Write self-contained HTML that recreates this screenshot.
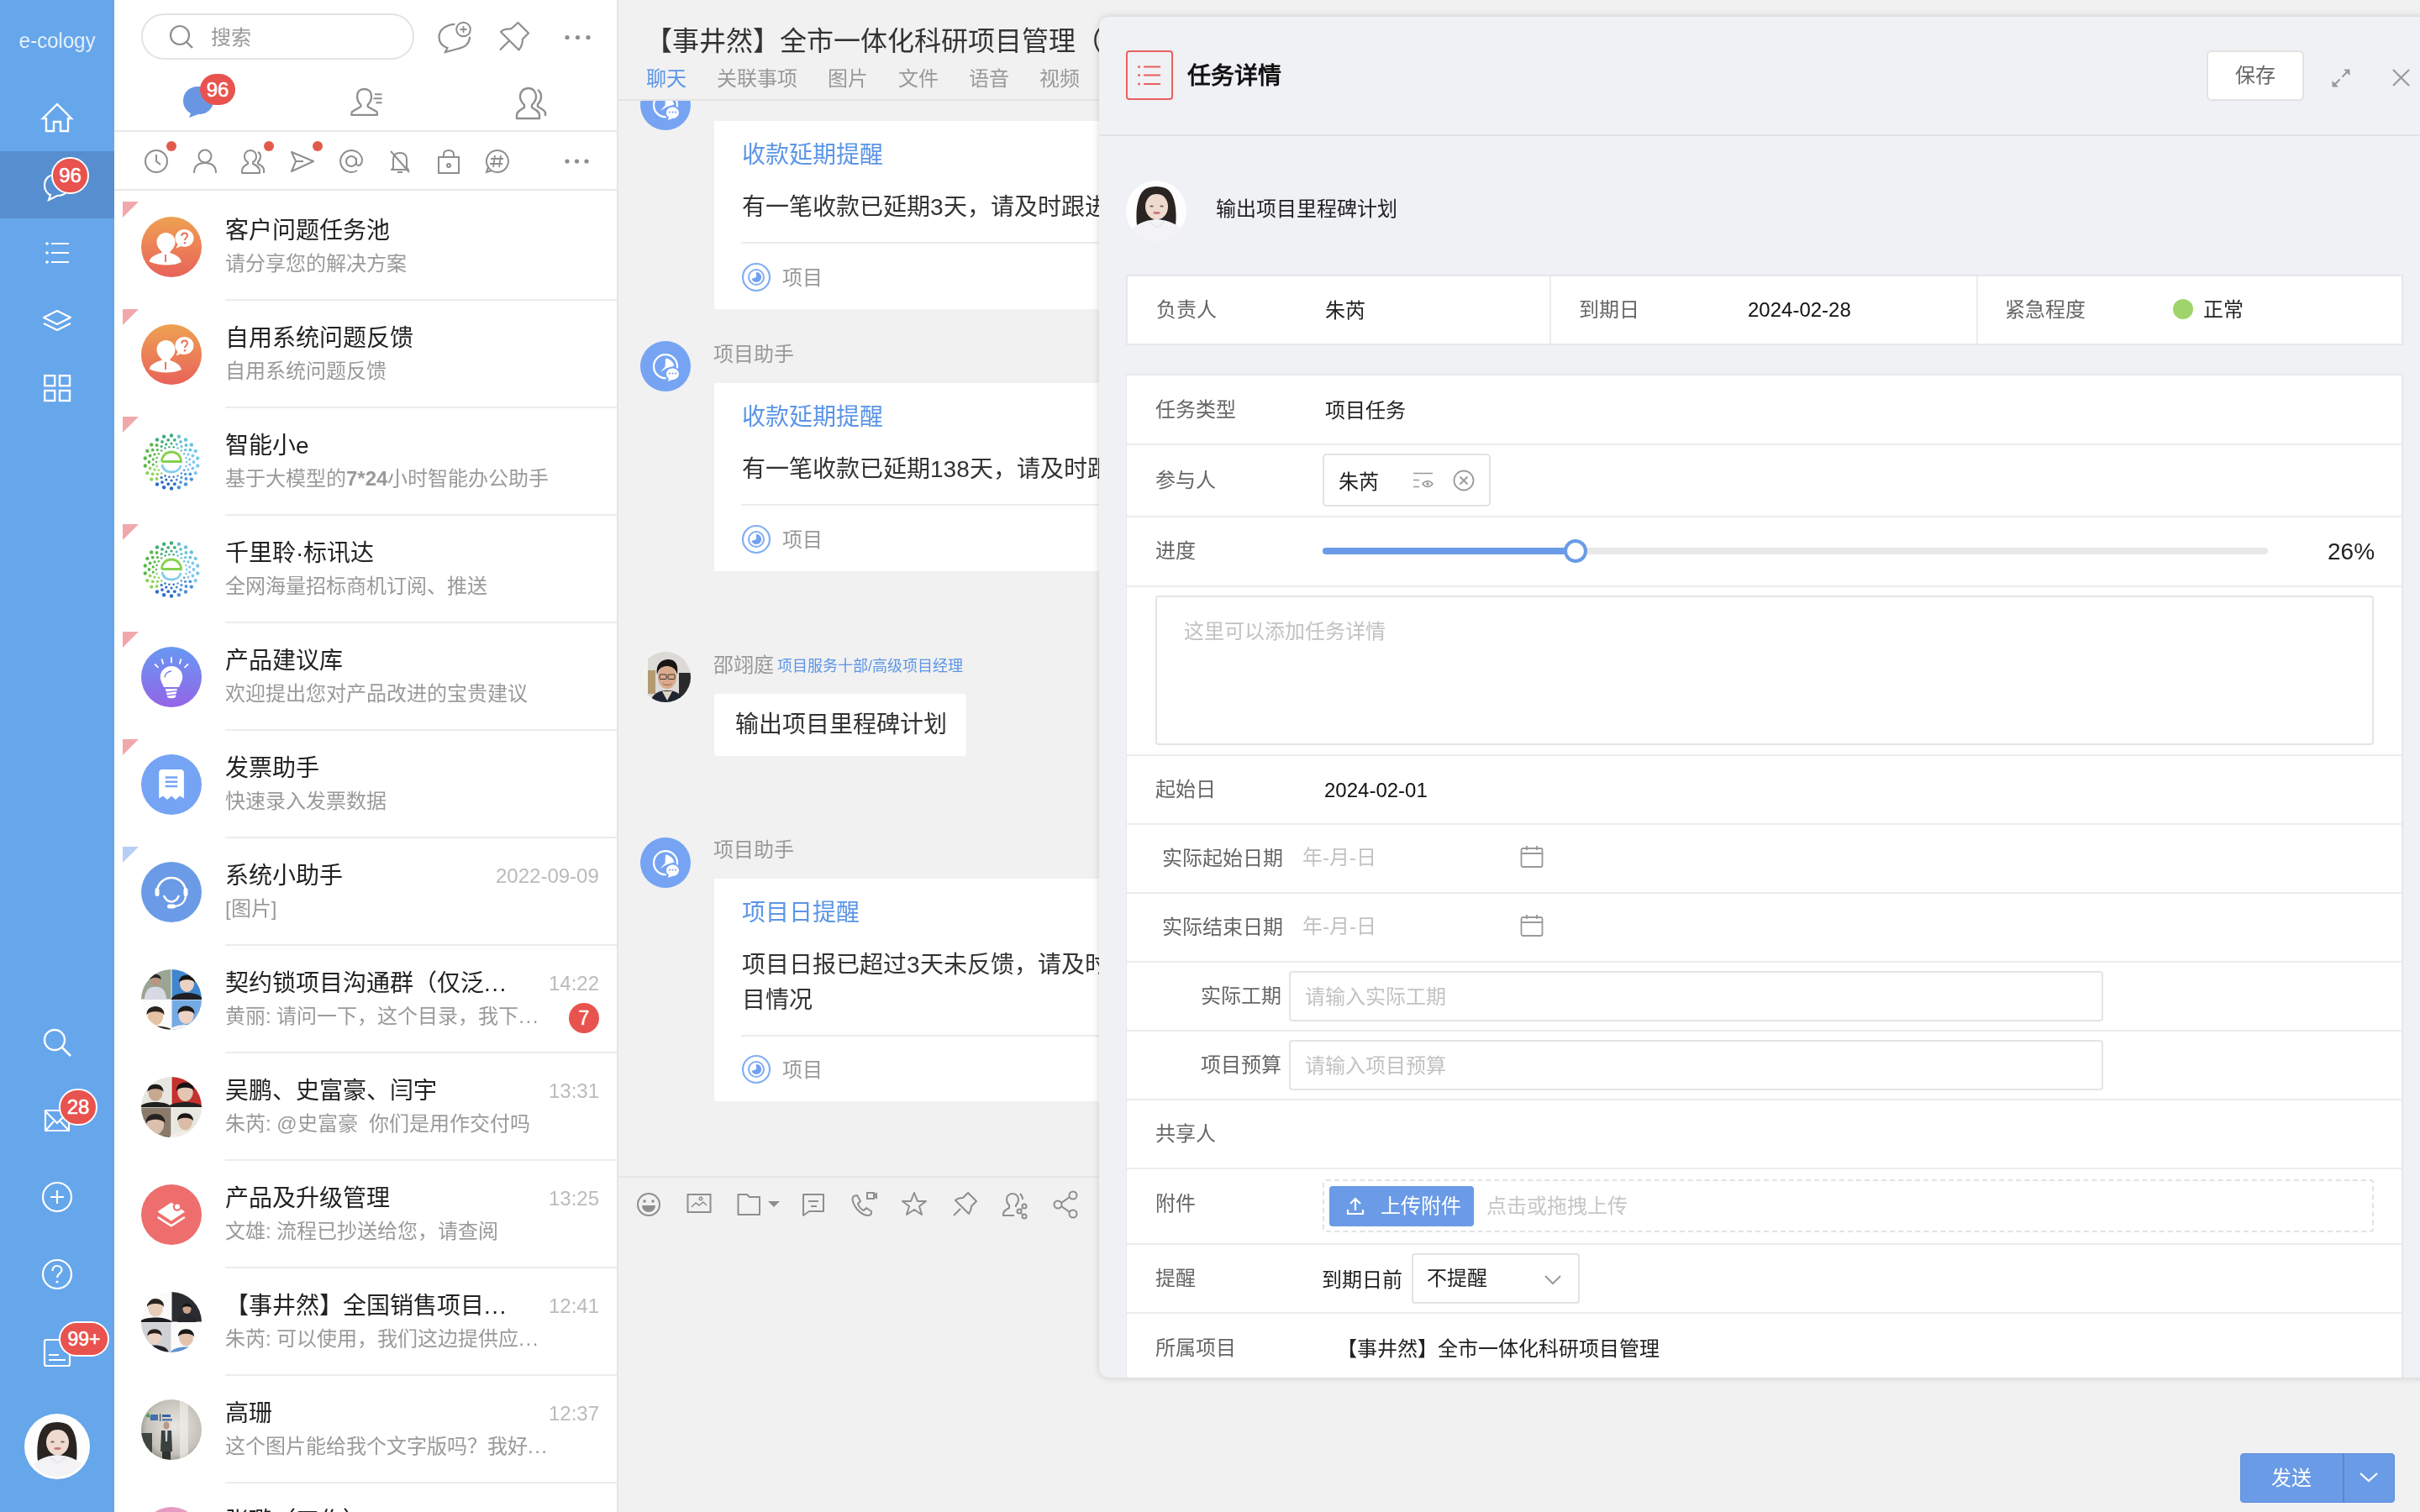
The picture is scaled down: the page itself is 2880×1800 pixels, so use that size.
<!DOCTYPE html>
<html lang="zh-CN"><head><meta charset="utf-8">
<style>
*{box-sizing:border-box;margin:0;padding:0}
html,body{width:2880px;height:1800px;overflow:hidden;background:#f1f1f1;font-family:"Liberation Sans",sans-serif;color:#222;-webkit-font-smoothing:antialiased}
.t{will-change:transform}
.a{position:absolute}
.t{position:absolute;white-space:nowrap;line-height:1}
svg{position:absolute;overflow:visible}
#sb{left:0;top:0;width:136px;height:1800px;background:#66a6eb}
#lp{left:136px;top:0;width:600px;height:1800px;background:#fff;border-right:2px solid #e6e6e6}
.badge{position:absolute;background:#e8534f;color:#fff;border-radius:22px;font-size:23px;text-align:center;font-weight:normal;-webkit-text-stroke:0.5px #fff}
.it-title{position:absolute;left:268px;font-size:28px;color:#222;white-space:nowrap;line-height:1}
.it-sub{position:absolute;left:268px;font-size:24px;color:#999;white-space:nowrap;line-height:1}
.it-div{position:absolute;left:268px;width:466px;height:2px;background:#ececec}
.it-time{position:absolute;right:2167px;font-size:24px;color:#bbb;white-space:nowrap;line-height:1}
.av{position:absolute;left:168px;width:72px;height:72px;border-radius:50%;overflow:hidden}
.flag{position:absolute;left:146px;width:0;height:0;border-top:19px solid #f0a8ac;border-right:19px solid transparent}
</style></head><body>

<!-- ============ SIDEBAR ============ -->
<div id="sb" class="a">
  <svg width="136" height="80" style="left:0;top:0"><text x="22.5" y="57" font-family="Liberation Sans" font-size="25" fill="rgba(255,255,255,0.95)" stroke="#66a6eb" stroke-width="0.25" textLength="91" lengthAdjust="spacingAndGlyphs">e-cology</text></svg>
  <!-- home -->
  <svg width="136" height="180" style="left:0;top:0"><path d="M68 124 L51 141 L55 141 L55 156 L64 156 L64 145 L72 145 L72 156 L81 156 L81 141 L85 141 Z" fill="none" stroke="#fff" stroke-width="2.4" stroke-linejoin="miter"/></svg>
  <div class="a" style="left:0;top:180px;width:136px;height:80px;background:#568ed0"></div>
  <!-- chat -->
  <svg width="136" height="100" style="left:0;top:180px"><path d="M66 28 C56 28 53 35 53 41 C53 47 57 51 60 52 L58 58 L68 53 C78 53 82 47 82 41" fill="none" stroke="#fff" stroke-width="2.2"/></svg>
  <div class="badge" style="left:61px;top:187px;width:45px;height:44px;border:2px solid #fff;line-height:40px;font-size:24px">96</div>
  <!-- list -->
  <svg width="136" height="40" style="left:0;top:280px"><g fill="#fff"><circle cx="56" cy="10" r="1.8"/><circle cx="56" cy="21" r="1.8"/><circle cx="56" cy="32" r="1.8"/></g><g stroke="#fff" stroke-width="2.2"><path d="M61 10H82M61 21H82M61 32H82"/></g></svg>
  <!-- layers -->
  <svg width="136" height="40" style="left:0;top:362px"><path d="M68 8 L84 16 L68 24 L52 16 Z" fill="none" stroke="#fff" stroke-width="2.2" stroke-linejoin="round"/><path d="M52 23 L68 31 L84 23" fill="none" stroke="#fff" stroke-width="2.2" stroke-linejoin="round"/></svg>
  <!-- grid -->
  <svg width="136" height="40" style="left:0;top:442px"><g fill="none" stroke="#fff" stroke-width="2.4"><rect x="53.2" y="5.2" width="12" height="12"/><rect x="71" y="5.2" width="12" height="12"/><rect x="53.2" y="23" width="12" height="12"/><rect x="71" y="23" width="12" height="12"/></g></svg>
  <!-- search -->
  <svg width="136" height="60" style="left:0;top:1210px"><circle cx="65" cy="28" r="12" fill="none" stroke="#fff" stroke-width="2.4"/><path d="M74 37 L84 47" stroke="#fff" stroke-width="2.6"/></svg>
  <!-- mail -->
  <svg width="136" height="60" style="left:0;top:1300px"><path d="M54 22 H82 V46 H54 Z" fill="none" stroke="#fff" stroke-width="2.2" stroke-linejoin="round"/><path d="M54 23 L68 37 L82 23 M55 45 L64 35 M81 45 L72 35" fill="none" stroke="#fff" stroke-width="2"/></svg>
  <div class="badge" style="left:70px;top:1296px;width:46px;height:44px;border:2px solid #fff;line-height:40px;font-size:24px">28</div>
  <!-- plus -->
  <svg width="136" height="60" style="left:0;top:1395px"><circle cx="68" cy="30" r="17" fill="none" stroke="#fff" stroke-width="2.2"/><path d="M68 22V38M60 30H76" stroke="#fff" stroke-width="2.2"/></svg>
  <!-- help -->
  <svg width="136" height="60" style="left:0;top:1487px"><circle cx="68" cy="30" r="17" fill="none" stroke="#fff" stroke-width="2.2"/><path d="M62.5 26 C62.5 21 66 20 68 20 C71 20 73.5 22 73.5 25 C73.5 29 68 29.5 68 34" fill="none" stroke="#fff" stroke-width="2.2"/><circle cx="68" cy="39" r="1.6" fill="#fff"/></svg>
  <!-- doc -->
  <svg width="136" height="60" style="left:0;top:1580px"><rect x="53" y="15" width="30" height="31" rx="2" fill="none" stroke="#fff" stroke-width="2.2"/><path d="M58 33 H70 M58 39 H78" stroke="#fff" stroke-width="2.2"/></svg>
  <div class="badge" style="left:70px;top:1573px;width:60px;height:42px;border:2px solid #fff;line-height:38px;font-size:23px">99+</div>
  <!-- avatar -->
  <svg width="80" height="80" style="left:28px;top:1682px"><circle cx="40" cy="40" r="39" fill="#fff"/><g transform="translate(4,4)"><defs><clipPath id="cw1"><circle cx="36" cy="36" r="36"/></clipPath></defs><g clip-path="url(#cw1)"><rect width="72" height="72" fill="#fdfdfd"/><path d="M13 53 C11 34 14 15 24 9.5 C30 6 42 6 48 9.5 C58 15 61 34 59 53 Z" fill="#2a2523"/><ellipse cx="36.5" cy="31" rx="13.5" ry="15.5" fill="#efdad0"/><path d="M22.5 26 C22 14 29 9.5 36.5 9.5 C44 9.5 51 14 50.5 26 C49 19 44 16 36.5 16 C29 16 24 19 22.5 26 Z" fill="#2a2523"/><ellipse cx="30.5" cy="30.5" rx="2.3" ry="1.1" fill="#6a6060"/><ellipse cx="42.5" cy="30.5" rx="2.3" ry="1.1" fill="#6a6060"/><ellipse cx="36.5" cy="38.5" rx="4.3" ry="1.4" fill="#c9767a"/><path d="M1 72 C3 56 17 47.5 36.5 46 C56 47.5 70 56 72 72 Z" fill="#f3f3f6"/><path d="M28 49 L37 56 L46 49" fill="none" stroke="#e2e2e8" stroke-width="1.2"/></g></g></svg>
</div>


<div id="lp" class="a"></div>
<div class="a" style="left:168px;top:16px;width:325px;height:55px;border:2px solid #e3e3e3;border-radius:27px;background:#fff"></div>
<svg width="40" height="40" viewBox="0 0 40 40" style="left:195px;top:25px"><circle cx="19" cy="17" r="11" fill="none" stroke="#8e8e8e" stroke-width="2.2"/><path d="M27 25 L34 32" stroke="#8e8e8e" stroke-width="2.4"/></svg>
<div class="t" style="left:251px;top:32.7px;font-size:24px;color:#9a9a9a;">搜索</div>
<svg width="50" height="50" viewBox="0 0 50 50" style="left:515px;top:20px"><path d="M25.5 8.8 C17 9.5 7.5 14.5 7.5 24 C7.5 30.5 11.5 35 17.5 37 L15 42 L30 38 C38 36.5 43.5 32 44 24.5" fill="none" stroke="#8e8e8e" stroke-width="2.2" stroke-linecap="round"/><circle cx="36.5" cy="15" r="8.3" fill="none" stroke="#8e8e8e" stroke-width="2"/><path d="M36.5 11V19M32.5 15H40.5" stroke="#8e8e8e" stroke-width="1.8"/></svg>
<svg width="45" height="45" viewBox="0 0 45 45" style="left:590px;top:22px"><path d="M26.5 5 L39 17.5 L32 24.5 C32 30 31 33 27.5 37.5 L6 16 C9 13 13 12 18 12.5 Z M15.5 27 L5 37.5" fill="none" stroke="#8e8e8e" stroke-width="2.2" stroke-linejoin="round"/></svg>
<svg width="45" height="20" viewBox="0 0 45 20" style="left:665px;top:35px"><g fill="#8e8e8e"><circle cx="10" cy="9.5" r="2.6"/><circle cx="22.5" cy="9.5" r="2.6"/><circle cx="35" cy="9.5" r="2.6"/></g></svg>
<svg width="60" height="60" viewBox="0 0 60 60" style="left:210px;top:95px"><path d="M26 8 C14 8 8 16 8 25 C8 32 12 37 17 40 L15 45 L26 41 C38 41 44 33 44 25 C44 16 38 8 26 8 Z" fill="#6896e2"/></svg>
<div class="badge" style="left:238px;top:88px;width:42px;height:37px;line-height:37px;font-size:24px;border-radius:19px">96</div>
<svg width="60" height="50" viewBox="0 0 60 50" style="left:410px;top:98px"><path d="M19.5 27 C16.5 24 15 20.5 15 16.5 C15 11 18.5 8 23.5 8 C28.5 8 32 11 32 16.5 C32 20.5 30.5 24 27.5 27 L27.8 29 L38.4 35 C39 36 39 37 39 38.8 H8.3 C8.3 37 8.5 36 9 35 L19.2 29 Z" fill="none" stroke="#8e8e8e" stroke-width="2.3" stroke-linejoin="round"/><path d="M36 14.2H44.5M34.4 19.2H44.5M37.2 24.3H44.5" stroke="#8e8e8e" stroke-width="2"/></svg>
<svg width="50" height="50" viewBox="0 0 50 50" style="left:610px;top:98px"><path d="M19 7 C12 7 9 12 9 17 C9 22 12 25 14 27 L14 30 C9 33 5 35 5 39 L5 43 L32 43 L32 39 C32 35 28 33 23 30 L23 27 C25 25 28 22 28 17 C28 12 25 7 19 7 Z" fill="none" stroke="#8e8e8e" stroke-width="2.4" stroke-linejoin="round"/><path d="M30 9 C33 11 34 14 34 17 C34 21 32 24 30 26 L30 29 C34 31 38 33 39 36 L39 40" fill="none" stroke="#8e8e8e" stroke-width="2.4"/></svg>
<div class="a" style="left:136px;top:155px;width:598px;height:2px;background:#e8e8e8"></div>
<svg width="40" height="40" viewBox="0 0 40 40" style="left:166px;top:172px"><circle cx="20" cy="20" r="13" fill="none" stroke="#8e8e8e" stroke-width="2"/><path d="M20 12 V20 L25 24" fill="none" stroke="#8e8e8e" stroke-width="2"/></svg>
<svg width="40" height="40" viewBox="0 0 40 40" style="left:224px;top:172px"><circle cx="20" cy="14" r="7.5" fill="none" stroke="#8e8e8e" stroke-width="2"/><path d="M7 34 C7 26 12 22 20 22 C28 22 33 26 33 34" fill="none" stroke="#8e8e8e" stroke-width="2"/></svg>
<svg width="40" height="40" viewBox="0 0 40 40" style="left:282px;top:172px"><path d="M16 7 C11 7 9 11 9 14 C9 18 11 20 13 21 L13 23 C9 25 6 27 6 31 L6 34 L27 34 L27 31 C27 27 23 25 19 23 L19 21 C21 20 23 18 23 14 C23 11 21 7 16 7 Z" fill="none" stroke="#8e8e8e" stroke-width="2" stroke-linejoin="round"/><path d="M25 9 C27 10 28 12 28 14 C28 17 27 19 25 21 L25 23 C29 25 32 27 32 30 L32 34" fill="none" stroke="#8e8e8e" stroke-width="2"/></svg>
<svg width="40" height="40" viewBox="0 0 40 40" style="left:340px;top:172px"><path d="M7 9 L33 20 L7 32 L12 20 Z M12 20 H21" fill="none" stroke="#8e8e8e" stroke-width="2" stroke-linejoin="round"/></svg>
<svg width="40" height="40" viewBox="0 0 40 40" style="left:398px;top:172px"><path d="M26 20 A6 6 0 1 1 26 19.9 M26 16 V22 C26 25 29 26 31 24 C33 22 33 18 33 18 A13 13 0 1 0 27 31" fill="none" stroke="#8e8e8e" stroke-width="2"/></svg>
<svg width="40" height="40" viewBox="0 0 40 40" style="left:456px;top:172px"><path d="M12 28 L12 18 C12 13 15 10 20 10 C25 10 28 13 28 18 L28 28 L30 30 L10 30 Z M17 33 H23 M9 8 L31 33" fill="none" stroke="#8e8e8e" stroke-width="2" stroke-linejoin="round"/></svg>
<svg width="40" height="40" viewBox="0 0 40 40" style="left:514px;top:172px"><rect x="8" y="15" width="24" height="19" fill="none" stroke="#8e8e8e" stroke-width="2"/><path d="M14 15 V12 C14 8 17 7 20 7 C23 7 26 8 26 12 V15" fill="none" stroke="#8e8e8e" stroke-width="2"/><circle cx="20" cy="25" r="2" fill="none" stroke="#8e8e8e" stroke-width="2"/></svg>
<svg width="40" height="40" viewBox="0 0 40 40" style="left:572px;top:172px"><path d="M20 7 A13 13 0 1 1 9 27 L7 33 L13 31" fill="none" stroke="#8e8e8e" stroke-width="2"/><path d="M9 27 A13 13 0 0 1 20 7" fill="none" stroke="#8e8e8e" stroke-width="2"/><path d="M17 13 L15 27 M24 13 L22 27 M12 17 H27 M11 23 H26" fill="none" stroke="#8e8e8e" stroke-width="1.8"/></svg>
<svg width="45" height="20" viewBox="0 0 45 20" style="left:665px;top:182px"><g fill="#8e8e8e"><circle cx="10" cy="10" r="2.6"/><circle cx="21.5" cy="10" r="2.6"/><circle cx="33" cy="10" r="2.6"/></g></svg>
<div class="a" style="left:198px;top:168px;width:12px;height:12px;border-radius:50%;background:#e25a4c"></div>
<div class="a" style="left:314px;top:168px;width:12px;height:12px;border-radius:50%;background:#e25a4c"></div>
<div class="a" style="left:372px;top:168px;width:12px;height:12px;border-radius:50%;background:#e25a4c"></div>
<div class="a" style="left:136px;top:225px;width:598px;height:2px;background:#e8e8e8"></div>
<div class="flag" style="top:240px;border-top-color:#f0a8ac"></div>
<svg width="72" height="72" viewBox="0 0 72 72" style="left:168px;top:258px"><defs><linearGradient id="og" x1="0" y1="0" x2="0" y2="1"><stop offset="0" stop-color="#eea152"/><stop offset="1" stop-color="#e8625a"/></linearGradient></defs><circle cx="36" cy="36" r="36" fill="url(#og)"/><path d="M29.5 19 C23 19 18.5 24 18.5 30 C18.5 35 21.5 39 24.5 41.5 L24.5 43 C19 44.5 11 47 9.5 53.5 C16 56 23 57.5 30 57.5 C37 57.5 43 56.5 48 54 C46.5 47.5 39.5 44.5 34.5 43 L34.5 41.5 C37.5 39 40.5 35 40.5 30 C40.5 24 36 19 29.5 19 Z" fill="#fff"/><path d="M29 45 V54" stroke="#e8665a" stroke-width="1.8"/><ellipse cx="51.5" cy="25.5" rx="11" ry="10.5" fill="#fff"/><path d="M44 32 L41.5 37.5 L49 34.5 Z" fill="#fff"/><path d="M48.3 23 C48.3 20.5 50 19.5 51.7 19.5 C53.5 19.5 55 20.7 55 22.5 C55 25 52 25.3 52 28" fill="none" stroke="#e8705a" stroke-width="1.9"/><circle cx="52" cy="31.2" r="1.3" fill="#e8705a"/></svg>
<div class="t" style="left:268px;top:260.8px;font-size:28px;color:#222;">客户问题任务池</div>
<div class="t" style="left:268px;top:301.7px;font-size:24px;color:#9a9a9a;">请分享您的解决方案</div>
<div class="a" style="left:268px;top:356px;width:466px;height:2px;background:#ececec"></div>
<div class="flag" style="top:368px;border-top-color:#f0a8ac"></div>
<svg width="72" height="72" viewBox="0 0 72 72" style="left:168px;top:386px"><defs><linearGradient id="og2" x1="0" y1="0" x2="0" y2="1"><stop offset="0" stop-color="#eea152"/><stop offset="1" stop-color="#e8625a"/></linearGradient></defs><circle cx="36" cy="36" r="36" fill="url(#og2)"/><path d="M29.5 19 C23 19 18.5 24 18.5 30 C18.5 35 21.5 39 24.5 41.5 L24.5 43 C19 44.5 11 47 9.5 53.5 C16 56 23 57.5 30 57.5 C37 57.5 43 56.5 48 54 C46.5 47.5 39.5 44.5 34.5 43 L34.5 41.5 C37.5 39 40.5 35 40.5 30 C40.5 24 36 19 29.5 19 Z" fill="#fff"/><path d="M29 45 V54" stroke="#e8665a" stroke-width="1.8"/><ellipse cx="51.5" cy="25.5" rx="11" ry="10.5" fill="#fff"/><path d="M44 32 L41.5 37.5 L49 34.5 Z" fill="#fff"/><path d="M48.3 23 C48.3 20.5 50 19.5 51.7 19.5 C53.5 19.5 55 20.7 55 22.5 C55 25 52 25.3 52 28" fill="none" stroke="#e8705a" stroke-width="1.9"/><circle cx="52" cy="31.2" r="1.3" fill="#e8705a"/></svg>
<div class="t" style="left:268px;top:388.8px;font-size:28px;color:#222;">自用系统问题反馈</div>
<div class="t" style="left:268px;top:429.7px;font-size:24px;color:#9a9a9a;">自用系统问题反馈</div>
<div class="a" style="left:268px;top:484px;width:466px;height:2px;background:#ececec"></div>
<div class="flag" style="top:496px;border-top-color:#f0a8ac"></div>
<svg width="72" height="72" viewBox="0 0 72 72" style="left:168px;top:514px"><circle cx="36.0" cy="4.5" r="2.2" fill="#3fae78"/><circle cx="44.9" cy="5.8" r="2.2" fill="#66c2d6"/><circle cx="53.0" cy="9.5" r="2.2" fill="#66c2d6"/><circle cx="59.8" cy="15.4" r="2.2" fill="#66c2d6"/><circle cx="64.7" cy="22.9" r="2.2" fill="#7cc8ee"/><circle cx="67.2" cy="31.5" r="2.2" fill="#7cc8ee"/><circle cx="67.2" cy="40.5" r="2.2" fill="#7cc8ee"/><circle cx="64.7" cy="49.1" r="2.2" fill="#7cc8ee"/><circle cx="59.8" cy="56.6" r="2.2" fill="#4f93da"/><circle cx="53.0" cy="62.5" r="2.2" fill="#4f93da"/><circle cx="44.9" cy="66.2" r="2.2" fill="#4f93da"/><circle cx="36.0" cy="67.5" r="2.2" fill="#2e6cc7"/><circle cx="27.1" cy="66.2" r="2.2" fill="#2e6cc7"/><circle cx="19.0" cy="62.5" r="2.2" fill="#2e6cc7"/><circle cx="12.2" cy="56.6" r="2.2" fill="#8cd461"/><circle cx="7.3" cy="49.1" r="2.2" fill="#8cd461"/><circle cx="4.8" cy="40.5" r="2.2" fill="#5ab84c"/><circle cx="4.8" cy="31.5" r="2.2" fill="#5ab84c"/><circle cx="7.3" cy="22.9" r="2.2" fill="#5ab84c"/><circle cx="12.2" cy="15.4" r="2.2" fill="#5ab84c"/><circle cx="19.0" cy="9.5" r="2.2" fill="#3fae78"/><circle cx="27.1" cy="5.8" r="2.2" fill="#3fae78"/><circle cx="39.8" cy="9.8" r="1.9" fill="#3fae78"/><circle cx="47.0" cy="11.9" r="1.9" fill="#66c2d6"/><circle cx="53.4" cy="16.0" r="1.9" fill="#66c2d6"/><circle cx="58.3" cy="21.7" r="1.9" fill="#66c2d6"/><circle cx="61.4" cy="28.5" r="1.9" fill="#7cc8ee"/><circle cx="62.5" cy="36.0" r="1.9" fill="#7cc8ee"/><circle cx="61.4" cy="43.5" r="1.9" fill="#7cc8ee"/><circle cx="58.3" cy="50.3" r="1.9" fill="#4f93da"/><circle cx="53.4" cy="56.0" r="1.9" fill="#4f93da"/><circle cx="47.0" cy="60.1" r="1.9" fill="#4f93da"/><circle cx="39.8" cy="62.2" r="1.9" fill="#2e6cc7"/><circle cx="32.2" cy="62.2" r="1.9" fill="#2e6cc7"/><circle cx="25.0" cy="60.1" r="1.9" fill="#2e6cc7"/><circle cx="18.6" cy="56.0" r="1.9" fill="#8cd461"/><circle cx="13.7" cy="50.3" r="1.9" fill="#8cd461"/><circle cx="10.6" cy="43.5" r="1.9" fill="#8cd461"/><circle cx="9.5" cy="36.0" r="1.9" fill="#5ab84c"/><circle cx="10.6" cy="28.5" r="1.9" fill="#5ab84c"/><circle cx="13.7" cy="21.7" r="1.9" fill="#5ab84c"/><circle cx="18.6" cy="16.0" r="1.9" fill="#5ab84c"/><circle cx="25.0" cy="11.9" r="1.9" fill="#3fae78"/><circle cx="32.2" cy="9.8" r="1.9" fill="#3fae78"/><circle cx="36.0" cy="14.0" r="1.6" fill="#3fae78"/><circle cx="42.2" cy="14.9" r="1.6" fill="#66c2d6"/><circle cx="47.9" cy="17.5" r="1.6" fill="#66c2d6"/><circle cx="52.6" cy="21.6" r="1.6" fill="#66c2d6"/><circle cx="56.0" cy="26.9" r="1.6" fill="#7cc8ee"/><circle cx="57.8" cy="32.9" r="1.6" fill="#7cc8ee"/><circle cx="57.8" cy="39.1" r="1.6" fill="#7cc8ee"/><circle cx="56.0" cy="45.1" r="1.6" fill="#7cc8ee"/><circle cx="52.6" cy="50.4" r="1.6" fill="#4f93da"/><circle cx="47.9" cy="54.5" r="1.6" fill="#4f93da"/><circle cx="42.2" cy="57.1" r="1.6" fill="#4f93da"/><circle cx="36.0" cy="58.0" r="1.6" fill="#2e6cc7"/><circle cx="29.8" cy="57.1" r="1.6" fill="#2e6cc7"/><circle cx="24.1" cy="54.5" r="1.6" fill="#2e6cc7"/><circle cx="19.4" cy="50.4" r="1.6" fill="#8cd461"/><circle cx="16.0" cy="45.1" r="1.6" fill="#8cd461"/><circle cx="14.2" cy="39.1" r="1.6" fill="#5ab84c"/><circle cx="14.2" cy="32.9" r="1.6" fill="#5ab84c"/><circle cx="16.0" cy="26.9" r="1.6" fill="#5ab84c"/><circle cx="19.4" cy="21.6" r="1.6" fill="#5ab84c"/><circle cx="24.1" cy="17.5" r="1.6" fill="#3fae78"/><circle cx="29.8" cy="14.9" r="1.6" fill="#3fae78"/><circle cx="38.6" cy="18.2" r="1.25" fill="#3fae78"/><circle cx="43.5" cy="19.6" r="1.25" fill="#66c2d6"/><circle cx="47.8" cy="22.4" r="1.25" fill="#66c2d6"/><circle cx="51.1" cy="26.3" r="1.25" fill="#66c2d6"/><circle cx="53.3" cy="30.9" r="1.25" fill="#7cc8ee"/><circle cx="54.0" cy="36.0" r="1.25" fill="#7cc8ee"/><circle cx="53.3" cy="41.1" r="1.25" fill="#7cc8ee"/><circle cx="51.1" cy="45.7" r="1.25" fill="#4f93da"/><circle cx="47.8" cy="49.6" r="1.25" fill="#4f93da"/><circle cx="43.5" cy="52.4" r="1.25" fill="#4f93da"/><circle cx="38.6" cy="53.8" r="1.25" fill="#2e6cc7"/><circle cx="33.4" cy="53.8" r="1.25" fill="#2e6cc7"/><circle cx="28.5" cy="52.4" r="1.25" fill="#2e6cc7"/><circle cx="24.2" cy="49.6" r="1.25" fill="#8cd461"/><circle cx="20.9" cy="45.7" r="1.25" fill="#8cd461"/><circle cx="18.7" cy="41.1" r="1.25" fill="#8cd461"/><circle cx="18.0" cy="36.0" r="1.25" fill="#5ab84c"/><circle cx="18.7" cy="30.9" r="1.25" fill="#5ab84c"/><circle cx="20.9" cy="26.3" r="1.25" fill="#5ab84c"/><circle cx="24.2" cy="22.4" r="1.25" fill="#5ab84c"/><circle cx="28.5" cy="19.6" r="1.25" fill="#3fae78"/><circle cx="33.4" cy="18.2" r="1.25" fill="#3fae78"/><path d="M24.5 35.5 H47.5 C47.5 29 42.5 24 36 24 C29.5 24 24.5 29 24.5 35.5" fill="none" stroke="#86d14e" stroke-width="2.8"/><path d="M24.8 39 C26 45 30.5 48 36 48 C41.5 48 46 45 47.2 40" fill="none" stroke="#82cdea" stroke-width="2.8"/></svg>
<div class="t" style="left:268px;top:516.8px;font-size:28px;color:#222;">智能小<span style="font-family:Liberation Sans">e</span></div>
<div class="t" style="left:268px;top:557.7px;font-size:24px;color:#9a9a9a;">基于大模型的<b style="font-weight:bold;color:#999">7*24</b>小时智能办公助手</div>
<div class="a" style="left:268px;top:612px;width:466px;height:2px;background:#ececec"></div>
<div class="flag" style="top:624px;border-top-color:#f0a8ac"></div>
<svg width="72" height="72" viewBox="0 0 72 72" style="left:168px;top:642px"><circle cx="36.0" cy="4.5" r="2.2" fill="#3fae78"/><circle cx="44.9" cy="5.8" r="2.2" fill="#66c2d6"/><circle cx="53.0" cy="9.5" r="2.2" fill="#66c2d6"/><circle cx="59.8" cy="15.4" r="2.2" fill="#66c2d6"/><circle cx="64.7" cy="22.9" r="2.2" fill="#7cc8ee"/><circle cx="67.2" cy="31.5" r="2.2" fill="#7cc8ee"/><circle cx="67.2" cy="40.5" r="2.2" fill="#7cc8ee"/><circle cx="64.7" cy="49.1" r="2.2" fill="#7cc8ee"/><circle cx="59.8" cy="56.6" r="2.2" fill="#4f93da"/><circle cx="53.0" cy="62.5" r="2.2" fill="#4f93da"/><circle cx="44.9" cy="66.2" r="2.2" fill="#4f93da"/><circle cx="36.0" cy="67.5" r="2.2" fill="#2e6cc7"/><circle cx="27.1" cy="66.2" r="2.2" fill="#2e6cc7"/><circle cx="19.0" cy="62.5" r="2.2" fill="#2e6cc7"/><circle cx="12.2" cy="56.6" r="2.2" fill="#8cd461"/><circle cx="7.3" cy="49.1" r="2.2" fill="#8cd461"/><circle cx="4.8" cy="40.5" r="2.2" fill="#5ab84c"/><circle cx="4.8" cy="31.5" r="2.2" fill="#5ab84c"/><circle cx="7.3" cy="22.9" r="2.2" fill="#5ab84c"/><circle cx="12.2" cy="15.4" r="2.2" fill="#5ab84c"/><circle cx="19.0" cy="9.5" r="2.2" fill="#3fae78"/><circle cx="27.1" cy="5.8" r="2.2" fill="#3fae78"/><circle cx="39.8" cy="9.8" r="1.9" fill="#3fae78"/><circle cx="47.0" cy="11.9" r="1.9" fill="#66c2d6"/><circle cx="53.4" cy="16.0" r="1.9" fill="#66c2d6"/><circle cx="58.3" cy="21.7" r="1.9" fill="#66c2d6"/><circle cx="61.4" cy="28.5" r="1.9" fill="#7cc8ee"/><circle cx="62.5" cy="36.0" r="1.9" fill="#7cc8ee"/><circle cx="61.4" cy="43.5" r="1.9" fill="#7cc8ee"/><circle cx="58.3" cy="50.3" r="1.9" fill="#4f93da"/><circle cx="53.4" cy="56.0" r="1.9" fill="#4f93da"/><circle cx="47.0" cy="60.1" r="1.9" fill="#4f93da"/><circle cx="39.8" cy="62.2" r="1.9" fill="#2e6cc7"/><circle cx="32.2" cy="62.2" r="1.9" fill="#2e6cc7"/><circle cx="25.0" cy="60.1" r="1.9" fill="#2e6cc7"/><circle cx="18.6" cy="56.0" r="1.9" fill="#8cd461"/><circle cx="13.7" cy="50.3" r="1.9" fill="#8cd461"/><circle cx="10.6" cy="43.5" r="1.9" fill="#8cd461"/><circle cx="9.5" cy="36.0" r="1.9" fill="#5ab84c"/><circle cx="10.6" cy="28.5" r="1.9" fill="#5ab84c"/><circle cx="13.7" cy="21.7" r="1.9" fill="#5ab84c"/><circle cx="18.6" cy="16.0" r="1.9" fill="#5ab84c"/><circle cx="25.0" cy="11.9" r="1.9" fill="#3fae78"/><circle cx="32.2" cy="9.8" r="1.9" fill="#3fae78"/><circle cx="36.0" cy="14.0" r="1.6" fill="#3fae78"/><circle cx="42.2" cy="14.9" r="1.6" fill="#66c2d6"/><circle cx="47.9" cy="17.5" r="1.6" fill="#66c2d6"/><circle cx="52.6" cy="21.6" r="1.6" fill="#66c2d6"/><circle cx="56.0" cy="26.9" r="1.6" fill="#7cc8ee"/><circle cx="57.8" cy="32.9" r="1.6" fill="#7cc8ee"/><circle cx="57.8" cy="39.1" r="1.6" fill="#7cc8ee"/><circle cx="56.0" cy="45.1" r="1.6" fill="#7cc8ee"/><circle cx="52.6" cy="50.4" r="1.6" fill="#4f93da"/><circle cx="47.9" cy="54.5" r="1.6" fill="#4f93da"/><circle cx="42.2" cy="57.1" r="1.6" fill="#4f93da"/><circle cx="36.0" cy="58.0" r="1.6" fill="#2e6cc7"/><circle cx="29.8" cy="57.1" r="1.6" fill="#2e6cc7"/><circle cx="24.1" cy="54.5" r="1.6" fill="#2e6cc7"/><circle cx="19.4" cy="50.4" r="1.6" fill="#8cd461"/><circle cx="16.0" cy="45.1" r="1.6" fill="#8cd461"/><circle cx="14.2" cy="39.1" r="1.6" fill="#5ab84c"/><circle cx="14.2" cy="32.9" r="1.6" fill="#5ab84c"/><circle cx="16.0" cy="26.9" r="1.6" fill="#5ab84c"/><circle cx="19.4" cy="21.6" r="1.6" fill="#5ab84c"/><circle cx="24.1" cy="17.5" r="1.6" fill="#3fae78"/><circle cx="29.8" cy="14.9" r="1.6" fill="#3fae78"/><circle cx="38.6" cy="18.2" r="1.25" fill="#3fae78"/><circle cx="43.5" cy="19.6" r="1.25" fill="#66c2d6"/><circle cx="47.8" cy="22.4" r="1.25" fill="#66c2d6"/><circle cx="51.1" cy="26.3" r="1.25" fill="#66c2d6"/><circle cx="53.3" cy="30.9" r="1.25" fill="#7cc8ee"/><circle cx="54.0" cy="36.0" r="1.25" fill="#7cc8ee"/><circle cx="53.3" cy="41.1" r="1.25" fill="#7cc8ee"/><circle cx="51.1" cy="45.7" r="1.25" fill="#4f93da"/><circle cx="47.8" cy="49.6" r="1.25" fill="#4f93da"/><circle cx="43.5" cy="52.4" r="1.25" fill="#4f93da"/><circle cx="38.6" cy="53.8" r="1.25" fill="#2e6cc7"/><circle cx="33.4" cy="53.8" r="1.25" fill="#2e6cc7"/><circle cx="28.5" cy="52.4" r="1.25" fill="#2e6cc7"/><circle cx="24.2" cy="49.6" r="1.25" fill="#8cd461"/><circle cx="20.9" cy="45.7" r="1.25" fill="#8cd461"/><circle cx="18.7" cy="41.1" r="1.25" fill="#8cd461"/><circle cx="18.0" cy="36.0" r="1.25" fill="#5ab84c"/><circle cx="18.7" cy="30.9" r="1.25" fill="#5ab84c"/><circle cx="20.9" cy="26.3" r="1.25" fill="#5ab84c"/><circle cx="24.2" cy="22.4" r="1.25" fill="#5ab84c"/><circle cx="28.5" cy="19.6" r="1.25" fill="#3fae78"/><circle cx="33.4" cy="18.2" r="1.25" fill="#3fae78"/><path d="M24.5 35.5 H47.5 C47.5 29 42.5 24 36 24 C29.5 24 24.5 29 24.5 35.5" fill="none" stroke="#86d14e" stroke-width="2.8"/><path d="M24.8 39 C26 45 30.5 48 36 48 C41.5 48 46 45 47.2 40" fill="none" stroke="#82cdea" stroke-width="2.8"/></svg>
<div class="t" style="left:268px;top:644.8px;font-size:28px;color:#222;">千里聆·标讯达</div>
<div class="t" style="left:268px;top:685.7px;font-size:24px;color:#9a9a9a;">全网海量招标商机订阅、推送</div>
<div class="a" style="left:268px;top:740px;width:466px;height:2px;background:#ececec"></div>
<div class="flag" style="top:752px;border-top-color:#f0a8ac"></div>
<svg width="72" height="72" viewBox="0 0 72 72" style="left:168px;top:770px"><defs><linearGradient id="pg" x1="0" y1="0" x2="0" y2="1"><stop offset="0" stop-color="#6898f2"/><stop offset="1" stop-color="#9464e8"/></linearGradient></defs><circle cx="36" cy="36" r="36" fill="url(#pg)"/><path d="M36 23 C28.5 23 22.7 29 22.7 36 C22.7 40 25 43.5 27 48 H45 C47 43.5 49.3 40 49.3 36 C49.3 29 43.5 23 36 23 Z" fill="#fff"/><path d="M28.9 50 H42.9 L40.8 60 C39 61.8 33 61.8 31.2 60 Z" fill="#fff"/><path d="M29.2 54.3 L42.6 52.6 M30.2 58.2 L41.8 56.6" stroke="#8a6fea" stroke-width="1.3"/><path d="M36 13 V18.5 M24.6 15 L26.2 20 M47.4 15 L45.8 20 M16.5 21 L20 24.3 M55.5 21 L52 24.3" stroke="#fff" stroke-width="1.8" stroke-linecap="round"/><path d="M28 36.5 C28.5 32.5 31.5 29.5 36 29" stroke="#7d80ea" stroke-width="1.4" fill="none"/></svg>
<div class="t" style="left:268px;top:772.8px;font-size:28px;color:#222;">产品建议库</div>
<div class="t" style="left:268px;top:813.7px;font-size:24px;color:#9a9a9a;">欢迎提出您对产品改进的宝贵建议</div>
<div class="a" style="left:268px;top:868px;width:466px;height:2px;background:#ececec"></div>
<div class="flag" style="top:880px;border-top-color:#f0a8ac"></div>
<svg width="72" height="72" viewBox="0 0 72 72" style="left:168px;top:898px"><circle cx="36" cy="36" r="36" fill="#76a4f4"/><path d="M21.2 22 C21.2 19.5 22.8 18 25 18 H47 C49.3 18 50.9 19.5 50.9 22 V52.5 L46 49.5 L41 54 L36 49.5 L31 54 L26 49.5 L21.2 52.5 Z" fill="#fff"/><path d="M28.7 27.5 H43.2 M28.7 32.8 H43.2 M28.7 38 H43.2" stroke="#76a4f4" stroke-width="2.6"/></svg>
<div class="t" style="left:268px;top:900.8px;font-size:28px;color:#222;">发票助手</div>
<div class="t" style="left:268px;top:941.7px;font-size:24px;color:#9a9a9a;">快速录入发票数据</div>
<div class="a" style="left:268px;top:996px;width:466px;height:2px;background:#ececec"></div>
<div class="flag" style="top:1008px;border-top-color:#b8cff5"></div>
<svg width="72" height="72" viewBox="0 0 72 72" style="left:168px;top:1026px"><circle cx="36" cy="36" r="36" fill="#6b9be6"/><path d="M19 36 A17 17 0 0 1 53 36" fill="none" stroke="#fff" stroke-width="2.6"/><rect x="16.5" y="31" width="5" height="10" rx="2.5" fill="#fff"/><rect x="50.5" y="31" width="5" height="10" rx="2.5" fill="#fff"/><path d="M53 40 C52.5 48 47 52.5 39 53" fill="none" stroke="#fff" stroke-width="2.4"/><rect x="31" y="50.5" width="10" height="5" rx="2.5" fill="#fff"/><path d="M27.5 41 C29.5 45.5 32.5 47.5 36 47.5 C39.5 47.5 42.5 45.5 44.5 41" fill="none" stroke="#fff" stroke-width="2.6" stroke-linecap="round"/></svg>
<div class="t" style="left:268px;top:1028.8px;font-size:28px;color:#222;">系统小助手</div>
<div class="t" style="left:268px;top:1069.7px;font-size:24px;color:#9a9a9a;">[图片]</div>
<div class="t" style="right:2167px;top:1030.7px;font-size:24px;color:#bbbbbb;">2022-09-09</div>
<div class="a" style="left:268px;top:1124px;width:466px;height:2px;background:#ececec"></div>
<svg width="72" height="72" viewBox="0 0 72 72" style="left:168px;top:1154px"><defs><clipPath id="cq1"><circle cx="36" cy="36" r="36"/></clipPath></defs><g clip-path="url(#cq1)"><rect x="0" y="0" width="35.5" height="35.5" fill="#9aa593"/><path d="M3.7 36 C5.1 22.1 11.4 20.7 17.0 20.7 C22.6 20.7 28.9 22.1 30.3 36 Z" fill="#d7d9e3"/><ellipse cx="17.0" cy="13.0" rx="6.0" ry="7.0" fill="#b99582"/><path d="M10.4 12.3 C9.6 3.5 24.4 3.5 23.6 12.3 C21.9 8.8 12.1 8.8 10.4 12.3 Z" fill="#2a2623"/><rect x="36.5" y="0" width="35.5" height="35.5" fill="#3f86cf"/><path d="M35.5 36 C37.5 30.0 46.5 28.0 54.5 28.0 C62.5 28.0 71.5 30.0 73.5 36 Z" fill="#1f1f24"/><ellipse cx="54.5" cy="17.0" rx="8.5" ry="10.0" fill="#ecd2c2"/><path d="M45.0 16.0 C44.0 3.5 65.0 3.5 64.0 16.0 C61.5 11.0 47.5 11.0 45.0 16.0 Z" fill="#1a1716"/><rect x="0" y="36.5" width="35.5" height="35.5" fill="#fbfbfb"/><path d="M-3.9 72.5 C-1.7 69.8 8.2 67.6 17.0 67.6 C25.8 67.6 35.7 69.8 37.9 72.5 Z" fill="#2d2b2a"/><ellipse cx="17.0" cy="55.5" rx="9.3" ry="11.0" fill="#e6c2a4"/><path d="M6.6 54.4 C5.4 40.6 28.6 40.6 27.4 54.4 C24.7 48.9 9.3 48.9 6.6 54.4 Z" fill="#2b2421"/><rect x="36.5" y="36.5" width="35.5" height="35.5" fill="#74aae3"/><path d="M33.5 72.5 C35.7 68.2 45.1 66.0 53.5 66.0 C61.9 66.0 71.3 68.2 73.5 72.5 Z" fill="#f4f4f4"/><ellipse cx="53.5" cy="54.5" rx="8.9" ry="10.5" fill="#eed3c5"/><path d="M43.5 53.5 C42.5 40.3 64.5 40.3 63.5 53.5 C60.9 48.2 46.1 48.2 43.5 53.5 Z" fill="#1e1a18"/></g></svg>
<div class="t" style="left:268px;top:1156.8px;font-size:28px;color:#222;">契约锁项目沟通群（仅泛<span style="letter-spacing:1.5px">...</span></div>
<div class="t" style="left:268px;top:1197.7px;font-size:24px;color:#9a9a9a;">黄丽: 请问一下，这个目录，我下<span style="letter-spacing:1.5px">...</span></div>
<div class="t" style="right:2167px;top:1158.7px;font-size:24px;color:#bbbbbb;">14:22</div>
<div class="a" style="left:268px;top:1252px;width:466px;height:2px;background:#ececec"></div>
<svg width="72" height="72" viewBox="0 0 72 72" style="left:168px;top:1282px"><defs><clipPath id="cq2"><circle cx="36" cy="36" r="36"/></clipPath></defs><g clip-path="url(#cq2)"><rect x="0" y="0" width="35.5" height="35.5" fill="#e8e6e0"/><path d="M-2.0 36 C0.0 32.0 9.0 30.0 17.0 30.0 C25.0 30.0 34.0 32.0 36.0 36 Z" fill="#1f1f1f"/><ellipse cx="17.0" cy="19.0" rx="8.5" ry="10.0" fill="#c9a890"/><path d="M7.5 18.0 C6.5 5.5 27.5 5.5 26.5 18.0 C24.0 13.0 10.0 13.0 7.5 18.0 Z" fill="#1f1c1a"/><rect x="36.5" y="0" width="35.5" height="35.5" fill="#c4312f"/><path d="M31.6 36 C33.8 32.3 43.7 30.1 52.5 30.1 C61.3 30.1 71.2 32.3 73.4 36 Z" fill="#222"/><ellipse cx="52.5" cy="18.0" rx="9.3" ry="11.0" fill="#e2c6b2"/><path d="M42.0 16.9 C41.0 3.1 64.0 3.1 63.0 16.9 C60.2 11.4 44.8 11.4 42.0 16.9 Z" fill="#151312"/><rect x="0" y="36.5" width="35.5" height="35.5" fill="#8a7a6a"/><path d="M-5.8 72.5 C-3.4 72.1 7.4 69.7 17.0 69.7 C26.6 69.7 37.4 72.1 39.8 72.5 Z" fill="#2a2f2c"/><ellipse cx="17.0" cy="56.5" rx="10.2" ry="12.0" fill="#dcc0ae"/><path d="M5.6 55.3 C4.4 40.3 29.6 40.3 28.4 55.3 C25.4 49.3 8.6 49.3 5.6 55.3 Z" fill="#262220"/><rect x="36.5" y="36.5" width="35.5" height="35.5" fill="#e9e8e0"/><path d="M33.5 72.5 C35.5 66.5 44.5 64.5 52.5 64.5 C60.5 64.5 69.5 66.5 71.5 72.5 Z" fill="#efede5"/><ellipse cx="52.5" cy="53.5" rx="8.5" ry="10.0" fill="#dbbca8"/><path d="M43.0 52.5 C42.0 40.0 63.0 40.0 62.0 52.5 C59.5 47.5 45.5 47.5 43.0 52.5 Z" fill="#1a1715"/></g></svg>
<div class="t" style="left:268px;top:1284.8px;font-size:28px;color:#222;">吴鹏、史富豪、闫宇</div>
<div class="t" style="left:268px;top:1325.7px;font-size:24px;color:#9a9a9a;">朱芮: @史富豪&nbsp;&nbsp;你们是用作交付吗</div>
<div class="t" style="right:2167px;top:1286.7px;font-size:24px;color:#bbbbbb;">13:31</div>
<div class="a" style="left:268px;top:1380px;width:466px;height:2px;background:#ececec"></div>
<svg width="72" height="72" viewBox="0 0 72 72" style="left:168px;top:1410px"><circle cx="36" cy="36" r="36" fill="#ee6e6e"/><path d="M35.8 22 L51.5 32.5 L35.8 43 L20 32.5 Z" fill="#fff" stroke="#fff" stroke-width="1" stroke-linejoin="round"/><path d="M20.5 39.5 L35.8 49.3 L51 39.5" fill="none" stroke="#fff" stroke-width="2.6" stroke-linecap="round"/><circle cx="43" cy="26.5" r="5.2" fill="#ee6e6e"/><circle cx="43" cy="26.5" r="3.1" fill="#fff"/></svg>
<div class="t" style="left:268px;top:1412.8px;font-size:28px;color:#222;">产品及升级管理</div>
<div class="t" style="left:268px;top:1453.7px;font-size:24px;color:#9a9a9a;">文雄: 流程已抄送给您，请查阅</div>
<div class="t" style="right:2167px;top:1414.7px;font-size:24px;color:#bbbbbb;">13:25</div>
<div class="a" style="left:268px;top:1508px;width:466px;height:2px;background:#ececec"></div>
<svg width="72" height="72" viewBox="0 0 72 72" style="left:168px;top:1538px"><defs><clipPath id="cq3"><circle cx="36" cy="36" r="36"/></clipPath></defs><g clip-path="url(#cq3)"><rect x="0" y="0" width="35.5" height="35.5" fill="#fafafa"/><path d="M-2.9 36 C-0.8 32.6 8.6 30.6 17.0 30.6 C25.4 30.6 34.8 32.6 37.0 36 Z" fill="#1e1e20"/><ellipse cx="17.0" cy="19.0" rx="8.9" ry="10.5" fill="#e8cdb9"/><path d="M7.0 17.9 C6.0 4.8 28.0 4.8 27.0 17.9 C24.4 12.7 9.7 12.7 7.0 17.9 Z" fill="#2a2522"/><rect x="36.5" y="0" width="35.5" height="35.5" fill="#2a2c30"/><path d="M43.1 36 C44.3 27.8 49.7 26.6 54.5 26.6 C59.3 26.6 64.7 27.8 65.9 36 Z" fill="#25272c"/><ellipse cx="54.5" cy="20.0" rx="5.1" ry="6.0" fill="#c8a48c"/><path d="M48.8 19.4 C48.2 11.9 60.8 11.9 60.2 19.4 C58.7 16.4 50.3 16.4 48.8 19.4 Z" fill="#151515"/><rect x="0" y="36.5" width="35.5" height="35.5" fill="#cfd1d4"/><path d="M-1.1 72.5 C0.7 65.2 8.8 63.4 16.0 63.4 C23.2 63.4 31.3 65.2 33.1 72.5 Z" fill="#22252e"/><ellipse cx="16.0" cy="53.5" rx="7.6" ry="9.0" fill="#efd2c4"/><path d="M7.5 52.6 C6.5 41.4 25.5 41.4 24.5 52.6 C22.3 48.1 9.7 48.1 7.5 52.6 Z" fill="#2a1f1c"/><rect x="36.5" y="36.5" width="35.5" height="35.5" fill="#fbfbfb"/><path d="M34.5 72.5 C36.5 67.5 45.5 65.5 53.5 65.5 C61.5 65.5 70.5 67.5 72.5 72.5 Z" fill="#5f92d2"/><ellipse cx="53.5" cy="54.5" rx="8.5" ry="10.0" fill="#e3c3ad"/><path d="M44.0 53.5 C43.0 41.0 64.0 41.0 63.0 53.5 C60.5 48.5 46.5 48.5 44.0 53.5 Z" fill="#1c1a19"/></g></svg>
<div class="t" style="left:268px;top:1540.8px;font-size:28px;color:#222;">【事井然】全国销售项目<span style="letter-spacing:1.5px">...</span></div>
<div class="t" style="left:268px;top:1581.7px;font-size:24px;color:#9a9a9a;">朱芮: 可以使用，我们这边提供应<span style="letter-spacing:1.5px">...</span></div>
<div class="t" style="right:2167px;top:1542.7px;font-size:24px;color:#bbbbbb;">12:41</div>
<div class="a" style="left:268px;top:1636px;width:466px;height:2px;background:#ececec"></div>
<svg width="72" height="72" viewBox="0 0 72 72" style="left:168px;top:1666px"><defs><clipPath id="cg"><circle cx="36" cy="36" r="36"/></clipPath><radialGradient id="gg" cx="0.55" cy="0.45" r="0.65"><stop offset="0" stop-color="#e9e7e2"/><stop offset="0.7" stop-color="#c4c1b9"/><stop offset="1" stop-color="#7d7b72"/></radialGradient></defs><g clip-path="url(#cg)"><rect width="72" height="72" fill="url(#gg)"/><rect x="46" y="0" width="10" height="72" fill="#f2f1ed" opacity="0.6"/><rect x="0" y="40" width="13" height="32" fill="#3e4640"/><path d="M5 20 L9 16 L11 22 Z" fill="#3f9a52"/><rect x="11" y="18" width="9" height="7" fill="#2d5fa8" opacity="0.85"/><rect x="22" y="17" width="1.2" height="9" fill="#555"/><rect x="25" y="18" width="10" height="3" fill="#3a62a8"/><rect x="25" y="23" width="12" height="2.5" fill="#3a62a8" opacity="0.8"/><ellipse cx="30" cy="31" rx="3.5" ry="4.5" fill="#b89a88"/><path d="M24 37 H36 L37 62 H23 Z" fill="#3a403e"/><path d="M28.5 37 H31.5 L31 50 H29 Z" fill="#cfd4dc"/><rect x="25" y="62" width="10" height="10" fill="#2f3330"/></g></svg>
<div class="t" style="left:268px;top:1668.8px;font-size:28px;color:#222;">高珊</div>
<div class="t" style="left:268px;top:1709.7px;font-size:24px;color:#9a9a9a;">这个图片能给我个文字版吗？我好<span style="letter-spacing:1.5px">...</span></div>
<div class="t" style="right:2167px;top:1670.7px;font-size:24px;color:#bbbbbb;">12:37</div>
<div class="a" style="left:268px;top:1764px;width:466px;height:2px;background:#ececec"></div>
<div class="badge" style="left:677px;top:1194px;width:36px;height:36px;line-height:36px;font-size:23px;border-radius:18px">7</div>
<svg width="72" height="72" viewBox="0 0 72 72" style="left:168px;top:1794px"><circle cx="36" cy="36" r="36" fill="#e69bc4"/></svg>
<div class="t" style="left:268px;top:1796.8px;font-size:28px;color:#222;">张璐（工作）</div>
<div class="a" style="left:736px;top:0px;width:2144px;height:1800px;background:#f1f1f1"></div>
<svg width="60" height="60" viewBox="0 0 60 60" style="left:762px;top:95px"><circle cx="30" cy="30" r="30" fill="#76a4f3"/><circle cx="30" cy="30.2" r="14" fill="none" stroke="#fff" stroke-width="2.3"/><path d="M30 20.5 C35.5 21 39.5 25 40.3 29.5 L31 32.5 L23.8 37 L29.5 30.5 Z" fill="#fff"/><ellipse cx="38.4" cy="39.3" rx="8.3" ry="7.6" fill="#fff" stroke="#76a4f3" stroke-width="2.2"/><ellipse cx="38.4" cy="39.3" rx="7.4" ry="6.8" fill="#fff"/><path d="M34 44.5 L33 48 L38.5 46 Z" fill="#fff"/><circle cx="35" cy="38.6" r="1.05" fill="#76a4f3"/><circle cx="38.5" cy="38.6" r="1.05" fill="#76a4f3"/><circle cx="42" cy="38.6" r="1.05" fill="#76a4f3"/></svg>
<div class="a" style="left:850px;top:144px;width:460px;height:224px;background:#fff"></div>
<div class="t" style="left:883px;top:170.8px;font-size:28px;color:#5b95e6;">收款延期提醒</div>
<div class="t" style="left:883px;top:232.8px;font-size:28px;color:#333;">有一笔收款已延期3天，请及时跟进</div>
<div class="a" style="left:882px;top:288px;width:428px;height:2px;background:#ececec"></div>
<svg width="36" height="36" viewBox="0 0 36 36" style="left:882px;top:312px"><circle cx="18" cy="18" r="16" fill="none" stroke="#82aef2" stroke-width="2.2"/><circle cx="18" cy="18" r="9" fill="none" stroke="#82aef2" stroke-width="2"/><path d="M18 12 A6 6 0 1 1 12.5 20 L18 18 Z" fill="#6fa0f2"/></svg>
<div class="t" style="left:931px;top:318.7px;font-size:24px;color:#999;">项目</div>
<div class="a" style="left:736px;top:0px;width:572px;height:118px;background:#f1f1f1"></div>
<div class="t" style="left:768px;top:33.0px;font-size:32px;color:#333;">【事井然】全市一体化科研项目管理（</div>
<div class="t" style="left:769px;top:81.7px;font-size:24px;color:#5b95e6;">聊天</div>
<div class="t" style="left:853px;top:81.7px;font-size:24px;color:#999;">关联事项</div>
<div class="t" style="left:985px;top:81.7px;font-size:24px;color:#999;">图片</div>
<div class="t" style="left:1069px;top:81.7px;font-size:24px;color:#999;">文件</div>
<div class="t" style="left:1153px;top:81.7px;font-size:24px;color:#999;">语音</div>
<div class="t" style="left:1237px;top:81.7px;font-size:24px;color:#999;">视频</div>
<div class="a" style="left:736px;top:118px;width:572px;height:2px;background:#e3e3e3"></div>
<svg width="60" height="60" viewBox="0 0 60 60" style="left:762px;top:406px"><circle cx="30" cy="30" r="30" fill="#76a4f3"/><circle cx="30" cy="30.2" r="14" fill="none" stroke="#fff" stroke-width="2.3"/><path d="M30 20.5 C35.5 21 39.5 25 40.3 29.5 L31 32.5 L23.8 37 L29.5 30.5 Z" fill="#fff"/><ellipse cx="38.4" cy="39.3" rx="8.3" ry="7.6" fill="#fff" stroke="#76a4f3" stroke-width="2.2"/><ellipse cx="38.4" cy="39.3" rx="7.4" ry="6.8" fill="#fff"/><path d="M34 44.5 L33 48 L38.5 46 Z" fill="#fff"/><circle cx="35" cy="38.6" r="1.05" fill="#76a4f3"/><circle cx="38.5" cy="38.6" r="1.05" fill="#76a4f3"/><circle cx="42" cy="38.6" r="1.05" fill="#76a4f3"/></svg>
<div class="t" style="left:849px;top:409.7px;font-size:24px;color:#999;">项目助手</div>
<div class="a" style="left:850px;top:456px;width:460px;height:224px;background:#fff"></div>
<div class="t" style="left:883px;top:482.8px;font-size:28px;color:#5b95e6;">收款延期提醒</div>
<div class="t" style="left:883px;top:544.8px;font-size:28px;color:#333;">有一笔收款已延期138天，请及时跟进</div>
<div class="a" style="left:882px;top:600px;width:428px;height:2px;background:#ececec"></div>
<svg width="36" height="36" viewBox="0 0 36 36" style="left:882px;top:624px"><circle cx="18" cy="18" r="16" fill="none" stroke="#82aef2" stroke-width="2.2"/><circle cx="18" cy="18" r="9" fill="none" stroke="#82aef2" stroke-width="2"/><path d="M18 12 A6 6 0 1 1 12.5 20 L18 18 Z" fill="#6fa0f2"/></svg>
<div class="t" style="left:931px;top:630.7px;font-size:24px;color:#999;">项目</div>
<svg width="60" height="60" viewBox="0 0 60 60" style="left:762px;top:776px"><defs><clipPath id="cs"><circle cx="30" cy="30" r="30"/></clipPath></defs><g clip-path="url(#cs)"><rect width="60" height="60" fill="#dcdad6"/><rect x="0" y="0" width="9" height="60" fill="#f2f2f0"/><rect x="9" y="22" width="9" height="28" fill="#b49a72"/><rect x="46" y="25" width="14" height="30" fill="#2a2a2c"/><path d="M12 60 C14 50 22 46 32 46 C42 46 50 50 52 60 Z" fill="#1f2433"/><path d="M26 47 L32 58 L38 47 Z" fill="#e0d6c6"/><ellipse cx="32" cy="30" rx="11" ry="14" fill="#d9aa8c"/><path d="M20 27 C18 12 28 9 33 9 C40 9 46 13 44 27 C42 19 36 17 32 17 C27 17 22 19 20 27 Z" fill="#1a1614"/><rect x="23" y="27" width="8" height="5.5" rx="1" fill="none" stroke="#3a3430" stroke-width="1"/><rect x="33" y="27" width="8" height="5.5" rx="1" fill="none" stroke="#3a3430" stroke-width="1"/><path d="M27 38 C30 40 34 40 37 38" fill="none" stroke="#8a5a4a" stroke-width="1"/></g></svg>
<div class="t" style="left:849px;top:779.7px;font-size:24px;color:#999;">邵翊庭</div>
<div class="t" style="left:925px;top:783.5px;font-size:18px;color:#5b95e6;">项目服务十部/高级项目经理</div>
<div class="a" style="left:850px;top:826px;width:300px;height:74px;background:#fff;border-radius:4px"></div>
<div class="t" style="left:875px;top:848.8px;font-size:28px;color:#333;">输出项目里程碑计划</div>
<svg width="60" height="60" viewBox="0 0 60 60" style="left:762px;top:997px"><circle cx="30" cy="30" r="30" fill="#76a4f3"/><circle cx="30" cy="30.2" r="14" fill="none" stroke="#fff" stroke-width="2.3"/><path d="M30 20.5 C35.5 21 39.5 25 40.3 29.5 L31 32.5 L23.8 37 L29.5 30.5 Z" fill="#fff"/><ellipse cx="38.4" cy="39.3" rx="8.3" ry="7.6" fill="#fff" stroke="#76a4f3" stroke-width="2.2"/><ellipse cx="38.4" cy="39.3" rx="7.4" ry="6.8" fill="#fff"/><path d="M34 44.5 L33 48 L38.5 46 Z" fill="#fff"/><circle cx="35" cy="38.6" r="1.05" fill="#76a4f3"/><circle cx="38.5" cy="38.6" r="1.05" fill="#76a4f3"/><circle cx="42" cy="38.6" r="1.05" fill="#76a4f3"/></svg>
<div class="t" style="left:849px;top:999.7px;font-size:24px;color:#999;">项目助手</div>
<div class="a" style="left:850px;top:1046px;width:460px;height:265px;background:#fff"></div>
<div class="t" style="left:883px;top:1072.8px;font-size:28px;color:#5b95e6;">项目日提醒</div>
<div class="t" style="left:883px;top:1134.8px;font-size:28px;color:#333;">项目日报已超过3天未反馈，请及时跟进项</div>
<div class="t" style="left:883px;top:1176.8px;font-size:28px;color:#333;">目情况</div>
<div class="a" style="left:882px;top:1232px;width:428px;height:2px;background:#ececec"></div>
<svg width="36" height="36" viewBox="0 0 36 36" style="left:882px;top:1255px"><circle cx="18" cy="18" r="16" fill="none" stroke="#82aef2" stroke-width="2.2"/><circle cx="18" cy="18" r="9" fill="none" stroke="#82aef2" stroke-width="2"/><path d="M18 12 A6 6 0 1 1 12.5 20 L18 18 Z" fill="#6fa0f2"/></svg>
<div class="t" style="left:931px;top:1261.7px;font-size:24px;color:#999;">项目</div>
<div class="a" style="left:736px;top:1400px;width:572px;height:2px;background:#e6e6e6"></div>
<svg width="40" height="40" viewBox="0 0 40 40" style="left:752px;top:1414px"><circle cx="20" cy="20" r="13" fill="none" stroke="#8e8e8e" stroke-width="2"/><circle cx="15" cy="16" r="1.8" fill="#8e8e8e"/><circle cx="25" cy="16" r="1.8" fill="#8e8e8e"/><path d="M12 21 H28 C28 26 24 29 20 29 C16 29 12 26 12 21 Z" fill="#8e8e8e"/></svg>
<svg width="40" height="40" viewBox="0 0 40 40" style="left:812px;top:1414px"><rect x="6.5" y="8" width="27" height="21" fill="none" stroke="#8e8e8e" stroke-width="2"/><path d="M11 23 L16 18 L20 21 L25 17 L29 21" fill="none" stroke="#8e8e8e" stroke-width="1.6"/><circle cx="22" cy="13" r="1.8" fill="none" stroke="#8e8e8e" stroke-width="1.4"/></svg>
<svg width="40" height="40" viewBox="0 0 40 40" style="left:872px;top:1414px"><path d="M6.5 8 H17 L20 11 H32 V32 H6.5 Z" fill="none" stroke="#8e8e8e" stroke-width="2" stroke-linejoin="round"/></svg>
<svg width="20" height="20" viewBox="0 0 20 20" style="left:912px;top:1424px"><path d="M2 6 H16 L9 13 Z" fill="#8e8e8e"/></svg>
<svg width="40" height="40" viewBox="0 0 40 40" style="left:948px;top:1414px"><path d="M8 8 H32 V28 H15 L8 33 Z" fill="none" stroke="#8e8e8e" stroke-width="2" stroke-linejoin="round"/><path d="M14 16 H26 M17 22 H24" fill="none" stroke="#8e8e8e" stroke-width="2"/></svg>
<svg width="40" height="40" viewBox="0 0 40 40" style="left:1008px;top:1414px"><path d="M8 10 C6 12 6 16 9 21 C12 27 18 32 24 33 C27 33 29 32 29 30 L29 28 L23 24 L20 27 C17 26 14 22 13 19 L16 16 L12 9 Z" fill="none" stroke="#8e8e8e" stroke-width="2" stroke-linejoin="round"/><rect x="24" y="6" width="8" height="7" fill="none" stroke="#8e8e8e" stroke-width="2"/><path d="M32 9 L35 7 V12 L32 10" fill="none" stroke="#8e8e8e" stroke-width="2"/></svg>
<svg width="40" height="40" viewBox="0 0 40 40" style="left:1068px;top:1414px"><path d="M20 6 L24 16 L34 16 L26 22 L29 32 L20 26 L11 32 L14 22 L6 16 L16 16 Z" fill="none" stroke="#8e8e8e" stroke-width="2" stroke-linejoin="round"/></svg>
<svg width="40" height="40" viewBox="0 0 40 40" style="left:1128px;top:1414px"><path d="M24 6 L34 16 L28 22 C28 26 27 28 25 31 L9 15 C11 13 14 12 18 12 Z M15 25 L7 33" fill="none" stroke="#8e8e8e" stroke-width="2" stroke-linejoin="round"/></svg>
<svg width="40" height="40" viewBox="0 0 40 40" style="left:1188px;top:1414px"><path d="M17 7 C12 7 10 11 10 14 C10 18 12 20 13 21 L13 24 C9 26 6 28 6 31 L6 33 L19 33" fill="none" stroke="#8e8e8e" stroke-width="2"/><path d="M17 7 C22 7 24 11 24 14 C24 18 22 20 21 21 L21 23" fill="none" stroke="#8e8e8e" stroke-width="2"/><path d="M26 7 C28 9 29 11 29 14" fill="none" stroke="#8e8e8e" stroke-width="2"/><circle cx="31" cy="22" r="2.5" fill="none" stroke="#8e8e8e" stroke-width="2"/><circle cx="25" cy="28" r="2.5" fill="none" stroke="#8e8e8e" stroke-width="2"/><circle cx="31" cy="34" r="2.5" fill="none" stroke="#8e8e8e" stroke-width="2"/><path d="M29 23 L27 27 M27 29 L29 33" fill="none" stroke="#8e8e8e" stroke-width="1.5"/></svg>
<svg width="40" height="40" viewBox="0 0 40 40" style="left:1248px;top:1414px"><circle cx="29" cy="9" r="4.5" fill="none" stroke="#8e8e8e" stroke-width="2"/><circle cx="11" cy="20" r="4.5" fill="none" stroke="#8e8e8e" stroke-width="2"/><circle cx="29" cy="31" r="4.5" fill="none" stroke="#8e8e8e" stroke-width="2"/><path d="M15 18 L25 11 M15 22 L25 29" fill="none" stroke="#8e8e8e" stroke-width="2"/></svg>
<div class="a" style="left:2666px;top:1730px;width:184px;height:59px;background:#6a9be6;border:1px solid #5e8fdd;border-radius:4px"></div>
<div class="a" style="left:2788px;top:1730px;width:2px;height:59px;background:#5a86cc"></div>
<div class="t" style="left:2703px;top:1747.7px;font-size:24px;color:#fff;">发送</div>
<svg width="40" height="30" viewBox="0 0 40 30" style="left:2800px;top:1745px"><path d="M9 9 L19 18 L29 9" fill="none" stroke="#fff" stroke-width="2.2"/></svg>
<div class="a" style="left:1308px;top:20px;width:1600px;height:1620px;background:#f0f1f5;border-radius:12px 0 0 12px;box-shadow:0 0 10px rgba(0,0,0,.16)"></div>
<div class="a" style="left:1340px;top:60px;width:56px;height:59px;border:2px solid #e8605f;border-radius:4px"></div>
<svg width="55" height="59" viewBox="0 0 55 59" style="left:1340px;top:60px"><g fill="#e8605f"><circle cx="15.5" cy="19.5" r="1.5"/><circle cx="15.5" cy="29.5" r="1.5"/><circle cx="15.5" cy="40" r="1.5"/></g><path d="M21 19.5 H41 M21 29.5 H41 M21 40 H41" stroke="#e8605f" stroke-width="2"/></svg>
<div class="t" style="left:1413px;top:76.8px;font-size:28px;color:#111;font-weight:bold">任务详情</div>
<div class="a" style="left:2626px;top:60px;width:116px;height:60px;background:#fff;border:2px solid #e2e2e2;border-radius:6px"></div>
<div class="t" style="left:2660px;top:77.7px;font-size:24px;color:#666;">保存</div>
<svg width="32" height="32" viewBox="0 0 32 32" style="left:2770px;top:77px"><path d="M7 25 L14.5 17.5 M17.5 14.5 L25 7" stroke="#999" stroke-width="2.2"/><path d="M19 5.5 H26.5 V13 Z" fill="#999"/><path d="M5.5 19 V26.5 H13 Z" fill="#999"/></svg>
<svg width="32" height="32" viewBox="0 0 32 32" style="left:2842px;top:77px"><path d="M6 6 L25 25 M25 6 L6 25" stroke="#999" stroke-width="2.2"/></svg>
<div class="a" style="left:1308px;top:160px;width:1572px;height:2px;background:#e2e3e7"></div>
<svg width="72" height="72" viewBox="0 0 72 72" style="left:1340px;top:215px"><defs><clipPath id="cw2"><circle cx="36" cy="36" r="36"/></clipPath></defs><g clip-path="url(#cw2)"><rect width="72" height="72" fill="#fdfdfd"/><path d="M13 53 C11 34 14 15 24 9.5 C30 6 42 6 48 9.5 C58 15 61 34 59 53 Z" fill="#2a2523"/><ellipse cx="36.5" cy="31" rx="13.5" ry="15.5" fill="#efdad0"/><path d="M22.5 26 C22 14 29 9.5 36.5 9.5 C44 9.5 51 14 50.5 26 C49 19 44 16 36.5 16 C29 16 24 19 22.5 26 Z" fill="#2a2523"/><ellipse cx="30.5" cy="30.5" rx="2.3" ry="1.1" fill="#6a6060"/><ellipse cx="42.5" cy="30.5" rx="2.3" ry="1.1" fill="#6a6060"/><ellipse cx="36.5" cy="38.5" rx="4.3" ry="1.4" fill="#c9767a"/><path d="M1 72 C3 56 17 47.5 36.5 46 C56 47.5 70 56 72 72 Z" fill="#f3f3f6"/><path d="M28 49 L37 56 L46 49" fill="none" stroke="#e2e2e8" stroke-width="1.2"/></g></svg>
<div class="t" style="left:1447px;top:236.7px;font-size:24px;color:#222;">输出项目里程碑计划</div>
<div class="a" style="left:1340px;top:327px;width:1520px;height:84px;background:#fff;border:2px solid #e6e7ea"></div>
<div class="a" style="left:1844px;top:329px;width:2px;height:80px;background:#ececec"></div>
<div class="a" style="left:2352px;top:329px;width:2px;height:80px;background:#ececec"></div>
<div class="t" style="left:1376px;top:356.7px;font-size:24px;color:#666;">负责人</div>
<div class="t" style="left:1577px;top:357.7px;font-size:24px;color:#222;">朱芮</div>
<div class="t" style="left:1879px;top:356.7px;font-size:24px;color:#666;">到期日</div>
<div class="t" style="left:2080px;top:356.7px;font-size:24px;color:#111;">2024-02-28</div>
<div class="t" style="left:2386px;top:356.7px;font-size:24px;color:#666;">紧急程度</div>
<div class="a" style="left:2586px;top:356px;width:24px;height:24px;border-radius:50%;background:#9fd46c"></div>
<div class="t" style="left:2622px;top:356.7px;font-size:24px;color:#222;">正常</div>
<div class="a" style="left:1340px;top:445px;width:1520px;height:1195px;background:#fff;border-left:1.5px solid #e6e7ea;border-right:2px solid #e6e7ea;border-top:2px solid #e6e7ea"></div>
<div class="a" style="left:1341px;top:528px;width:1517px;height:2px;background:#ececec"></div>
<div class="a" style="left:1341px;top:614px;width:1517px;height:2px;background:#ececec"></div>
<div class="a" style="left:1341px;top:697px;width:1517px;height:2px;background:#ececec"></div>
<div class="a" style="left:1341px;top:898px;width:1517px;height:2px;background:#ececec"></div>
<div class="a" style="left:1341px;top:980px;width:1517px;height:2px;background:#ececec"></div>
<div class="a" style="left:1341px;top:1062px;width:1517px;height:2px;background:#ececec"></div>
<div class="a" style="left:1341px;top:1144px;width:1517px;height:2px;background:#ececec"></div>
<div class="a" style="left:1341px;top:1226px;width:1517px;height:2px;background:#ececec"></div>
<div class="a" style="left:1341px;top:1308px;width:1517px;height:2px;background:#ececec"></div>
<div class="a" style="left:1341px;top:1390px;width:1517px;height:2px;background:#ececec"></div>
<div class="a" style="left:1341px;top:1480px;width:1517px;height:2px;background:#ececec"></div>
<div class="a" style="left:1341px;top:1562px;width:1517px;height:2px;background:#ececec"></div>
<div class="t" style="left:1375px;top:475.7px;font-size:24px;color:#666;">任务类型</div>
<div class="t" style="left:1577px;top:476.7px;font-size:24px;color:#222;">项目任务</div>
<div class="t" style="left:1375px;top:559.7px;font-size:24px;color:#666;">参与人</div>
<div class="a" style="left:1574px;top:540px;width:200px;height:63px;border:2px solid #e2e2e2;border-radius:5px;background:#fff"></div>
<div class="t" style="left:1593px;top:561.7px;font-size:24px;color:#222;">朱芮</div>
<svg width="32" height="32" viewBox="0 0 32 32" style="left:1678px;top:556px"><path d="M4 7.5 H27 M4 15.5 H11 M4 23.5 H11" stroke="#999" stroke-width="1.6"/><path d="M15 20 C18 15.5 24 15.5 27 20 C24 24.5 18 24.5 15 20 Z" fill="none" stroke="#999" stroke-width="1.5"/><circle cx="21" cy="20" r="1.8" fill="#999"/></svg>
<svg width="32" height="32" viewBox="0 0 32 32" style="left:1726px;top:556px"><circle cx="16" cy="16" r="11.5" fill="none" stroke="#999" stroke-width="1.8"/><path d="M11.5 11.5 L20.5 20.5 M20.5 11.5 L11.5 20.5" stroke="#999" stroke-width="1.8"/></svg>
<div class="t" style="left:1375px;top:643.7px;font-size:24px;color:#666;">进度</div>
<div class="a" style="left:1574px;top:652px;width:1125px;height:8px;background:#e8e8e8;border-radius:4px"></div>
<div class="a" style="left:1574px;top:652px;width:301px;height:8px;background:#6a9be6;border-radius:4px"></div>
<div class="a" style="left:1861px;top:642px;width:28px;height:28px;border:4px solid #6a9be6;border-radius:50%;background:#fff"></div>
<div class="t" style="left:2770px;top:642.8px;font-size:28px;color:#222;">26%</div>
<div class="a" style="left:1375px;top:709px;width:1450px;height:178px;border:2px solid #e4e4e4;border-radius:4px;background:#fff"></div>
<div class="t" style="left:1409px;top:739.7px;font-size:24px;color:#c2c2c2;">这里可以添加任务详情</div>
<div class="t" style="left:1375px;top:927.7px;font-size:24px;color:#666;">起始日</div>
<div class="t" style="left:1576px;top:928.7px;font-size:24px;color:#111;">2024-02-01</div>
<div class="t" style="left:1383px;top:1009.7px;font-size:24px;color:#666;">实际起始日期</div>
<div class="t" style="left:1550px;top:1008.7px;font-size:24px;color:#c2c2c2;">年-月-日</div>
<div class="t" style="left:1383px;top:1091.7px;font-size:24px;color:#666;">实际结束日期</div>
<div class="t" style="left:1550px;top:1090.7px;font-size:24px;color:#c2c2c2;">年-月-日</div>
<svg width="32" height="32" viewBox="0 0 32 32" style="left:1807px;top:1004px"><rect x="3.5" y="6" width="25" height="22" rx="2" fill="none" stroke="#999" stroke-width="1.8"/><path d="M3.5 12 H28.5 M10 3 V8 M22 3 V8" stroke="#999" stroke-width="1.8"/></svg>
<svg width="32" height="32" viewBox="0 0 32 32" style="left:1807px;top:1086px"><rect x="3.5" y="6" width="25" height="22" rx="2" fill="none" stroke="#999" stroke-width="1.8"/><path d="M3.5 12 H28.5 M10 3 V8 M22 3 V8" stroke="#999" stroke-width="1.8"/></svg>
<div class="t" style="left:1429px;top:1173.7px;font-size:24px;color:#666;">实际工期</div>
<div class="a" style="left:1534px;top:1156px;width:969px;height:60px;border:2px solid #e4e4e4;border-radius:4px;background:#fff"></div>
<div class="t" style="left:1553px;top:1174.7px;font-size:24px;color:#c2c2c2;">请输入实际工期</div>
<div class="t" style="left:1429px;top:1255.7px;font-size:24px;color:#666;">项目预算</div>
<div class="a" style="left:1534px;top:1238px;width:969px;height:60px;border:2px solid #e4e4e4;border-radius:4px;background:#fff"></div>
<div class="t" style="left:1553px;top:1256.7px;font-size:24px;color:#c2c2c2;">请输入项目预算</div>
<div class="t" style="left:1375px;top:1337.7px;font-size:24px;color:#666;">共享人</div>
<div class="t" style="left:1375px;top:1420.7px;font-size:24px;color:#666;">附件</div>
<div class="a" style="left:1574px;top:1404px;width:1251px;height:63px;border:2px dashed #e2e2e2;border-radius:4px"></div>
<div class="a" style="left:1582px;top:1412px;width:172px;height:48px;background:#6b9be6;border-radius:4px"></div>
<svg width="32" height="32" viewBox="0 0 32 32" style="left:1596.5px;top:1420px"><path d="M16 7 V21 M10 13 L16 7 L22 13" fill="none" stroke="#fff" stroke-width="2.2"/><path d="M7 20 V25 H25 V20" fill="none" stroke="#fff" stroke-width="2.2"/></svg>
<div class="t" style="left:1643px;top:1423.7px;font-size:24px;color:#fff;">上传附件</div>
<div class="t" style="left:1769px;top:1423.7px;font-size:24px;color:#c6c6c6;">点击或拖拽上传</div>
<div class="t" style="left:1375px;top:1509.7px;font-size:24px;color:#666;">提醒</div>
<div class="t" style="left:1573px;top:1511.7px;font-size:24px;color:#222;">到期日前</div>
<div class="a" style="left:1680px;top:1492px;width:200px;height:60px;border:2px solid #e2e2e2;border-radius:4px;background:#fff"></div>
<div class="t" style="left:1698px;top:1509.7px;font-size:24px;color:#222;">不提醒</div>
<svg width="32" height="28" viewBox="0 0 32 28" style="left:1832px;top:1510px"><path d="M7 9 L16 18 L25 9" fill="none" stroke="#999" stroke-width="2"/></svg>
<div class="t" style="left:1375px;top:1592.7px;font-size:24px;color:#666;">所属项目</div>
<div class="t" style="left:1591px;top:1593.7px;font-size:24px;color:#222;">【事井然】全市一体化科研项目管理</div>
</body></html>
